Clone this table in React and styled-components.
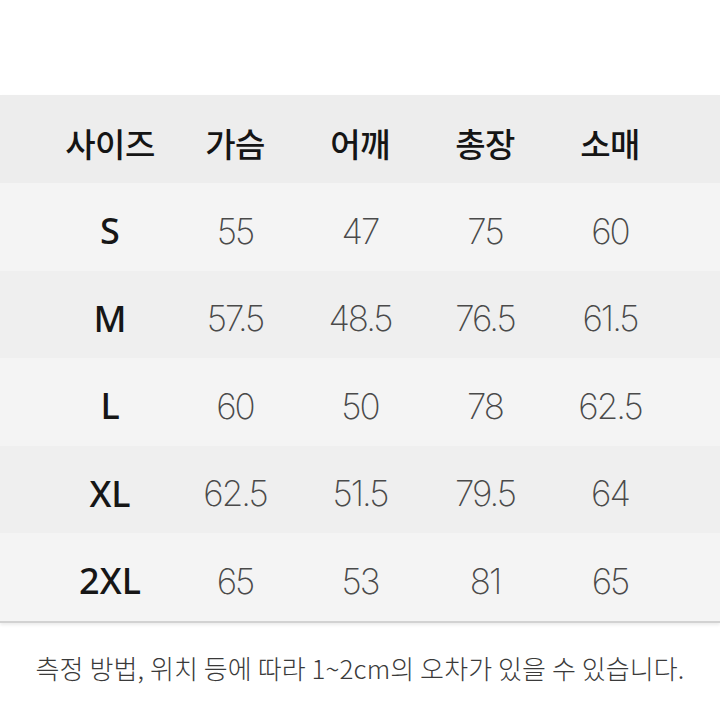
import React from "react";
import styled, { createGlobalStyle } from "styled-components";

const Global = createGlobalStyle`
  html, body { margin: 0; padding: 0; background: #ffffff; }
  body { font-family: "Noto Sans CJK KR", "Noto Sans", sans-serif; }
`;

const Page = styled.div`
  width: 720px;
  height: 720px;
  background: #ffffff;
  padding-top: 95px;
  box-sizing: border-box;
`;

const Table = styled.div`
  width: 720px;
  border-bottom: 2px solid #d2d2d2;
  box-shadow: 0 2px 3px rgba(0, 0, 0, 0.08);
`;

const Row = styled.div`
  display: grid;
  grid-template-columns: repeat(5, 125px);
  justify-content: center;
  align-items: center;
  box-sizing: border-box;
  padding-top: 9px;
  height: ${(p) => p.$h || 87.5}px;
  background: ${(p) => p.$bg};
`;

const HeadCell = styled.div`
  text-align: center;
  font-family: "Noto Sans CJK KR", sans-serif;
  font-weight: 500;
  font-size: 33px;
  color: #151515;
  letter-spacing: -0.5px;
  line-height: 1;
`;

const SizeCell = styled.div`
  text-align: center;
  font-family: "Noto Sans", "Liberation Sans", sans-serif;
  font-weight: 500;
  font-size: 36px;
  color: #161616;
  line-height: 1;
`;

const NumCell = styled.div`
  text-align: center;
  font-family: Inter, "Noto Sans", sans-serif;
  font-weight: 200;
  font-size: 35px;
  letter-spacing: -2px;
  color: #4a4a4a;
  line-height: 1;
`;

const Note = styled.p`
  margin: 0;
  padding-top: 26px;
  text-align: center;
  font-family: "Noto Sans CJK KR", sans-serif;
  font-weight: 300;
  font-size: 26px;
  letter-spacing: 0.1px;
  color: #3a3a3a;
`;

const headers = ["사이즈", "가슴", "어깨", "총장", "소매"];
const rows = [
  ["S", "55", "47", "75", "60"],
  ["M", "57.5", "48.5", "76.5", "61.5"],
  ["L", "60", "50", "78", "62.5"],
  ["XL", "62.5", "51.5", "79.5", "64"],
  ["2XL", "65", "53", "81", "65"],
];

export default function App() {
  return (
    <Page>
      <Global />
      <Table>
        <Row $bg="#ededed" $h={88}>
          {headers.map((h) => (
            <HeadCell key={h}>{h}</HeadCell>
          ))}
        </Row>
        {rows.map((r, i) => (
          <Row key={r[0]} $bg={i % 2 === 0 ? "#f4f4f4" : "#efefef"}>
            <SizeCell>{r[0]}</SizeCell>
            {r.slice(1).map((v, j) => (
              <NumCell key={j}>{v}</NumCell>
            ))}
          </Row>
        ))}
      </Table>
      <Note>측정 방법, 위치 등에 따라 1~2cm의 오차가 있을 수 있습니다.</Note>
    </Page>
  );
}
